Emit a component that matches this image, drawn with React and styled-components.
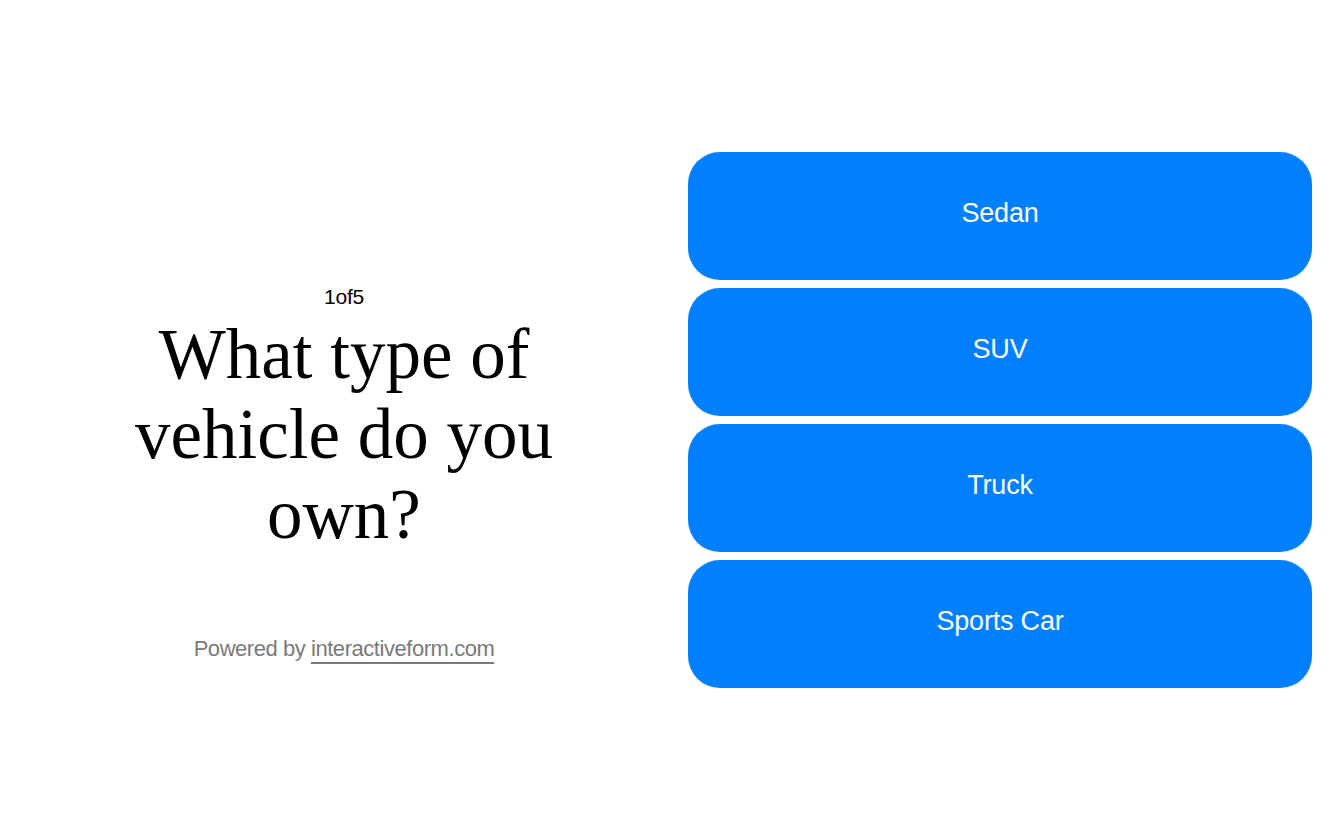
import React from "react";
import styled, { createGlobalStyle } from "styled-components";

const Global = createGlobalStyle`
  html, body { margin: 0; padding: 0; background: #ffffff; }
  #root { height: 100vh; }
`;

const Page = styled.main`
  height: 840px;
  box-sizing: border-box;
  padding: 0 32px;
  display: grid;
  grid-template-columns: 1fr 1fr;
  column-gap: 32px;
`;

const Intro = styled.section`
  display: grid;
  grid-template-rows: 1fr auto 1fr;
  justify-items: center;
  text-align: center;
`;

const Question = styled.div`
  grid-row: 2;
  display: flex;
  flex-direction: column;
  align-items: center;
`;

const Counter = styled.div`
  font-family: "Liberation Sans", Arial, sans-serif;
  font-size: 21px;
  letter-spacing: -0.2px;
  color: #000;
  line-height: 22px;
  margin-bottom: 6px;
`;

const Title = styled.h1`
  margin: 0;
  font-family: "Liberation Serif", "Times New Roman", serif;
  font-weight: 400;
  font-size: 71px;
  line-height: 80px;
  color: #000;
  max-width: 480px;
`;

const Footer = styled.div`
  grid-row: 3;
  align-self: start;
  margin-top: 82px;
  font-family: "Liberation Sans", Arial, sans-serif;
  font-size: 22px;
  letter-spacing: -0.45px;
  color: #7a7a7a;
`;

const FooterLink = styled.a`
  color: #7a7a7a;
  text-decoration: none;
  border-bottom: 2px solid #7a7a7a;
  padding-bottom: 1px;
`;

const Options = styled.section`
  display: flex;
  flex-direction: column;
  justify-content: center;
  gap: 8px;
`;

const Option = styled.button`
  height: 128px;
  width: 100%;
  border: none;
  border-radius: 32px;
  padding: 0 0 6px;
  background: #0080ff;
  color: #ffffff;
  font-family: "Liberation Sans", Arial, sans-serif;
  font-size: 27px;
  letter-spacing: -0.2px;
  cursor: pointer;
`;

const choices = ["Sedan", "SUV", "Truck", "Sports Car"];

export default function App() {
  return (
    <>
      <Global />
      <Page>
        <Intro>
          <Question>
            <Counter>1of5</Counter>
            <Title>What type of vehicle do you own?</Title>
          </Question>
          <Footer>
            Powered by <FooterLink href="#">interactiveform.com</FooterLink>
          </Footer>
        </Intro>
        <Options>
          {choices.map((c) => (
            <Option key={c}>{c}</Option>
          ))}
        </Options>
      </Page>
    </>
  );
}
